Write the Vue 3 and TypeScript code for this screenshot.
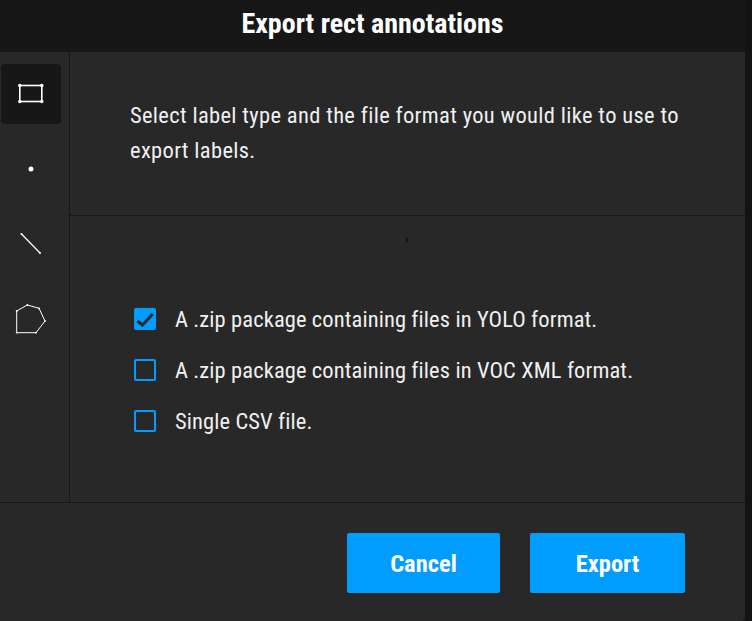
<script setup lang="ts">
import { ref } from 'vue'

const tools = ['rect', 'point', 'line', 'polygon']
const activeTool = ref('rect')

const polygon: [number, number][] = [
  [15.7, 19],
  [26.3, 13],
  [38, 16.3],
  [44, 29],
  [35, 40.7],
  [15.7, 40.7],
]
const polygonPath = polygon.map((p) => p.join(',')).join(' ')

const formats = [
  'A .zip package containing files in YOLO format.',
  'A .zip package containing files in VOC XML format.',
  'Single CSV file.',
]
const selected = ref(0)
</script>

<template>
  <div class="popup">
    <div class="header">Export rect annotations</div>
    <div class="content">
      <div class="sidebar">
        <button
          v-for="tool in tools"
          :key="tool"
          class="tool"
          :class="{ active: activeTool === tool }"
          :title="tool"
          @click="activeTool = tool"
        >
          <svg width="60" height="60" viewBox="0 0 60 60" fill="none" stroke="#fff">
            <g v-if="tool === 'rect'">
              <rect x="18.800" y="21.500" width="22" height="16" stroke-width="1.6" />
              <g fill="#fff" stroke="none">
                <circle cx="18.800" cy="21.500" r="1.700" />
                <circle cx="40.800" cy="21.500" r="1.700" />
                <circle cx="18.800" cy="37.500" r="1.700" />
                <circle cx="40.800" cy="37.500" r="1.700" />
              </g>
            </g>
            <circle v-else-if="tool === 'point'" cx="30" cy="29" r="2.500" fill="#fff" stroke="none" />
            <g v-else-if="tool === 'line'">
              <path d="M20.500 18 L39 37" stroke-width="1.200" />
              <g fill="#fff" stroke="none">
                <circle cx="20.500" cy="18" r="1" />
                <circle cx="39" cy="37" r="1" />
              </g>
            </g>
            <g v-else>
              <polygon :points="polygonPath" stroke-width="1" />
              <circle
                v-for="p in polygon"
                :key="p[0]"
                :cx="p[0]"
                :cy="p[1]"
                r="0.900"
                fill="#fff"
                stroke="none"
              />
            </g>
          </svg>
        </button>
      </div>
      <div class="main">
        <div class="message">
          Select label type and the file format you would like to use to export labels.
        </div>
        <div class="options">
          <span class="speck"></span>
          <label v-for="(format, i) in formats" :key="format" class="option" @click="selected = i">
            <span class="checkbox" :class="{ checked: selected === i }">
              <svg v-if="selected === i" width="18" height="18" viewBox="0 0 18 18" fill="none">
                <path d="M1.300 11 L6.500 15 L16.700 4" stroke="#282828" stroke-width="3" />
              </svg>
            </span>
            <span>{{ format }}</span>
          </label>
        </div>
      </div>
    </div>
    <div class="footer">
      <button class="action cancel">Cancel</button>
      <button class="action export">Export</button>
    </div>
  </div>
</template>

<style scoped>
.popup {
  width: 745px;
  height: 621px;
  display: flex;
  flex-direction: column;
  background: #282828;
  border-bottom-right-radius: 4px;
  color: #fff;
  font-family: Roboto, "Open Sans", sans-serif;
  font-stretch: 75%;
}

.header {
  height: 52px;
  flex-shrink: 0;
  display: flex;
  align-items: center;
  justify-content: center;
  background: #171717;
  padding-bottom: 5px;
  box-sizing: border-box;
  font-size: 28px;
  font-weight: 700;
}

.content {
  height: 450px;
  flex-shrink: 0;
  display: flex;
  border-bottom: 1px solid #171717;
}

.sidebar {
  width: 70px;
  box-sizing: border-box;
  flex-shrink: 0;
  border-right: 1px solid #171717;
  display: flex;
  flex-direction: column;
  align-items: flex-start;
  padding: 12px 0 0 1px;
  gap: 16px;
}

.tool {
  width: 60px;
  height: 60px;
  padding: 0;
  border: none;
  border-radius: 4px;
  background: transparent;
  cursor: pointer;
}

.tool.active {
  background: #171717;
}

.tool svg {
  display: block;
}

.main {
  flex: 1;
  display: flex;
  flex-direction: column;
}

.message {
  height: 164px;
  flex-shrink: 0;
  box-sizing: border-box;
  padding: 46px 60px 0;
  border-bottom: 1px solid #171717;
  font-size: 22.500px;
  letter-spacing: 0.330px;
  line-height: 35px;
  color: #f0f0f0;
}

.options {
  flex: 1;
  display: flex;
  flex-direction: column;
  gap: 15px;
  padding: 85px 0 0 64px;
  position: relative;
}

.speck {
  position: absolute;
  left: 336px;
  top: 22px;
  width: 2px;
  height: 4px;
  background: #111;
}

.option {
  display: flex;
  align-items: center;
  gap: 19px;
  height: 36px;
  font-size: 22.500px;
  letter-spacing: 0.100px;
  color: #f0f0f0;
  cursor: pointer;
}

.checkbox {
  width: 22px;
  height: 22px;
  box-sizing: border-box;
  flex-shrink: 0;
  border: 2px solid #009dff;
  border-radius: 2px;
  display: flex;
  align-items: center;
  justify-content: center;
}

.checkbox.checked {
  background: #009dff;
}

.footer {
  flex: 1;
  display: flex;
  align-items: flex-start;
  padding: 30px 0 0 347px;
  gap: 30px;
}

.action {
  height: 60px;
  border: none;
  border-radius: 2px;
  background: #009dff;
  color: #fff;
  font-family: inherit;
  font-stretch: 75%;
  font-size: 24.500px;
  font-weight: 700;
  cursor: pointer;
}

.cancel {
  width: 153px;
}

.export {
  width: 155px;
}
</style>

<style>
html,
body {
  background: #131313;
}
</style>
